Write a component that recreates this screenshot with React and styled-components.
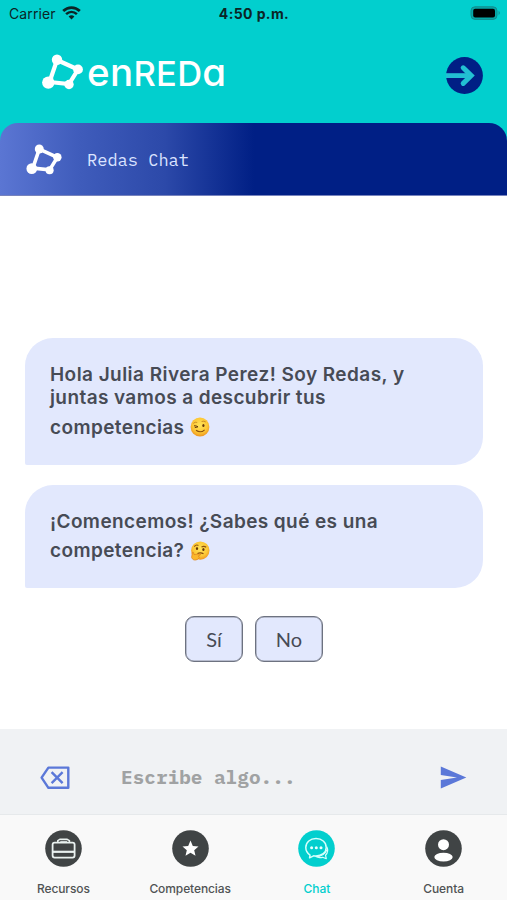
import React from "react";
import styled, { createGlobalStyle } from "styled-components";

const Colors = {
  teal: "#02cfce",
  navy: "#001f85",
  periwinkle: "#5b78d8",
  bubble: "#e2e8fd",
  text: "#474b55",
  dark: "#404445",
};

const Fonts = {
  ui: `"Inter", "Liberation Sans", sans-serif`,
  mono: `"IBM Plex Mono", "DejaVu Sans Mono", "Liberation Mono", monospace`,
  lato: `"Lato", "Liberation Sans", sans-serif`,
};

const App = () => {
  return (
    <>
      <GlobalStyle />
      <Screen>
        <StatusBar>
          <Carrier>
            <CarrierName>Carrier</CarrierName>
            <WifiIcon />
          </Carrier>
          <Time>4:50 p.m.</Time>
          <BatteryIcon />
        </StatusBar>
        <Header>
          <Brand>
            <NetworkIcon width={41} height={36} />
            <Wordmark>
              <Lower>en</Lower>RED<Lower>a</Lower>
            </Wordmark>
          </Brand>
          <ExitIcon />
        </Header>
        <TitleWrapper>
          <TitleBar>
            <NetworkIcon width={36} height={31} />
            <Title>Redas Chat</Title>
          </TitleBar>
        </TitleWrapper>
        <Messages>
          <Bubble>
            <Line $spacing="0.45px">Hola Julia Rivera Perez! Soy Redas, y</Line>
            <Line>juntas vamos a descubrir tus</Line>
            <EmojiLine $height="34px">
              competencias
              <WinkEmoji />
            </EmojiLine>
          </Bubble>
          <Bubble>
            <Line>¡Comencemos! ¿Sabes qué es una</Line>
            <EmojiLine>
              competencia?
              <ThinkingEmoji />
            </EmojiLine>
          </Bubble>
          <Answers>
            <Answer $width="58px">Sí</Answer>
            <Answer $width="68px">No</Answer>
          </Answers>
        </Messages>
        <Composer>
          <EraseIcon />
          <Input placeholder="Escribe algo..." />
          <SendIcon />
        </Composer>
        <TabBar>
          <Tab>
            <CaseIcon />
            Recursos
          </Tab>
          <Tab>
            <StarIcon />
            Competencias
          </Tab>
          <Tab $active>
            <ChatIcon />
            Chat
          </Tab>
          <Tab>
            <PersonIcon />
            Cuenta
          </Tab>
        </TabBar>
      </Screen>
    </>
  );
};

const NetworkIcon = ({ width, height }) => (
  <svg width={width} height={height} viewBox="0 0 41 36" fill="#fff">
    <path
      d="M15 6 L36 15.5 L27 30 L7.5 28 Z"
      fill="none"
      stroke="#fff"
      strokeWidth="4.2"
    />
    <circle cx="15" cy="5.8" r="5.2" />
    <circle cx="36" cy="15.4" r="4.9" />
    <circle cx="27" cy="30.5" r="4.7" />
    <circle cx="6.3" cy="28.6" r="6.2" />
  </svg>
);

const WifiIcon = () => (
  <svg width="19" height="14" viewBox="0 0 19 14" fill="none" stroke="#0b2526">
    <path d="M1.2 5 C6 0.4 13 0.4 17.8 5" strokeWidth="2.8" />
    <path d="M4.1 8.1 C7.3 5.2 11.7 5.2 14.9 8.1" strokeWidth="2.6" />
    <path d="M6.6 10.4 C8.4 8.9 10.6 8.9 12.4 10.4 L9.5 13.6 Z" fill="#0b2526" stroke="none" />
  </svg>
);

const BatteryIcon = () => (
  <svg width="31" height="14" viewBox="0 0 31 14">
    <rect x="1" y="0.8" width="26" height="12.6" rx="4" fill="#04a9a9" stroke="#158b8d" />
    <rect x="3.2" y="2.8" width="21.8" height="8.8" rx="2" fill="#000" />
    <path d="M28.6 4.8 Q31 7 28.6 9.3 Z" fill="#158b8d" />
  </svg>
);

const ExitIcon = () => (
  <svg width="37" height="37" viewBox="0 0 37 37">
    <circle cx="18.5" cy="18.5" r="18.4" fill={Colors.navy} />
    <path d="M0 18.6 H24" stroke="#22c0d3" strokeWidth="4.8" />
    <path
      d="M17.2 10.8 L25.2 18.6 L17.2 26.4"
      fill="none"
      stroke="#22c0d3"
      strokeWidth="5"
      strokeLinecap="round"
    />
  </svg>
);

const WinkEmoji = () => (
  <svg width="20" height="20" viewBox="0 0 20 20" fill="none">
    <defs>
      <radialGradient id="wink" cx="0.5" cy="0.4" r="0.6">
        <stop offset="0" stopColor="#ffe45a" />
        <stop offset="0.65" stopColor="#fdc835" />
        <stop offset="1" stopColor="#ee9520" />
      </radialGradient>
    </defs>
    <circle cx="10" cy="10" r="9.4" fill="url(#wink)" />
    <path d="M3.3 6.4 Q5 4.6 7.2 5.4" stroke="#b8741a" strokeWidth="0.7" />
    <path d="M11.6 4.5 Q14 3.6 15.8 5" stroke="#b8741a" strokeWidth="0.7" />
    <path d="M4 8.8 Q6.4 8.6 8 9.8 L4.8 10.6" stroke="#65380b" strokeWidth="1" />
    <ellipse cx="13.4" cy="8.6" rx="1.1" ry="1.5" fill="#65380b" />
    <path d="M6 13.2 Q10.5 16.6 14.6 12.8" stroke="#884b0c" strokeWidth="1.1" />
  </svg>
);

const ThinkingEmoji = () => (
  <svg width="20" height="20" viewBox="0 0 20 20" fill="none">
    <defs>
      <radialGradient id="thinking" cx="0.5" cy="0.4" r="0.6">
        <stop offset="0" stopColor="#ffe45a" />
        <stop offset="0.65" stopColor="#fdc835" />
        <stop offset="1" stopColor="#ee9520" />
      </radialGradient>
    </defs>
    <circle cx="10.3" cy="9.6" r="9.2" fill="url(#thinking)" />
    <path d="M4.3 5.6 Q6 3.2 8.4 4.4" stroke="#8e520f" strokeWidth="1.1" />
    <path d="M11.5 6 Q14 4.6 16.2 6.3" stroke="#8e520f" strokeWidth="1.1" />
    <ellipse cx="7" cy="7.6" rx="1.1" ry="1.5" fill="#65380b" />
    <ellipse cx="13.4" cy="8.5" rx="1.1" ry="1.5" fill="#65380b" />
    <path d="M7.5 12.6 Q10.5 11 13.5 12.8" stroke="#884b0c" strokeWidth="1.2" />
    <path
      d="M2.4 11.2 Q3.8 10.6 4 13.6 L10.4 12.8 Q11.4 14 8.4 14.8 Q10.5 16.5 7.6 18.4 Q3.2 20.4 1.6 16.5 Z"
      fill="#fbb72b"
      stroke="#dc821b"
      strokeWidth="0.7"
    />
  </svg>
);

const EraseIcon = () => (
  <svg width="30" height="24" viewBox="0 0 30 24" fill="none" stroke={Colors.periwinkle}>
    <path d="M8.4 1.6 H28.3 V21.8 H8.4 L1.6 11.7 Z" strokeWidth="2.4" strokeLinejoin="round" />
    <path d="M11.6 6.2 L22.6 17.2 M22.6 6.2 L11.6 17.2" strokeWidth="2.4" />
  </svg>
);

const SendIcon = () => (
  <svg width="27" height="23" viewBox="0 0 27 23" fill={Colors.periwinkle}>
    <path d="M0.8 0.5 L26.3 11.5 L0.8 22.5 V14 L17 11.5 L0.8 9 Z" />
  </svg>
);

const CaseIcon = () => (
  <svg width="37" height="37" viewBox="0 0 37 37" fill="none" stroke="#e9f1f0">
    <circle cx="18.5" cy="18.5" r="18.3" fill={Colors.dark} stroke="none" />
    <rect x="7.6" y="12.6" width="22" height="15" rx="2" strokeWidth="1.8" />
    <path d="M8 21.8 H29.2" strokeWidth="2.2" />
    <path d="M12.8 12 V10.6 L15 9.2 H22 L24.4 10.6 V12" strokeWidth="1.6" />
    <path d="M15.3 11.3 H22" strokeWidth="1" />
  </svg>
);

const StarIcon = () => (
  <svg width="37" height="37" viewBox="0 0 37 37">
    <circle cx="18.5" cy="18.5" r="18.3" fill={Colors.dark} />
    <path
      d="M18.5 10.6 L20.8 15.9 L26.5 16.4 L22.2 20.2 L23.5 25.8 L18.5 22.8 L13.5 25.8 L14.8 20.2 L10.5 16.4 L16.2 15.9 Z"
      fill="#fff"
    />
  </svg>
);

const ChatIcon = () => (
  <svg width="37" height="37" viewBox="0 0 37 37" fill="none" stroke="#d5fffc">
    <circle cx="18.5" cy="18.5" r="18.3" fill={Colors.teal} stroke="none" />
    <path
      d="M12 25.2 Q7.8 22.2 7.8 17.6 C7.8 12 12.3 8.5 18 8.5 C23.8 8.5 28.2 12.2 28.2 17.4 C28.2 22.7 23.8 26 18 26 Q16.8 26 15.6 25.8 L11.6 27.8 Z"
      strokeWidth="1.5"
      strokeLinejoin="round"
    />
    <path
      d="M28.8 16.8 Q31.2 21.6 27.5 25.2 L28.3 28.7 L24.6 27.3 Q20.5 28.3 17.8 26.6 Q26 26.5 28.8 20"
      strokeWidth="1.2"
      strokeLinejoin="round"
    />
    <g fill="#e9fffd" stroke="none">
      <circle cx="13.6" cy="17.7" r="1.5" />
      <circle cx="18.3" cy="17.7" r="1.5" />
      <circle cx="23" cy="17.7" r="1.5" />
    </g>
  </svg>
);

const PersonIcon = () => (
  <svg width="37" height="37" viewBox="0 0 37 37" fill="#fff">
    <circle cx="18.5" cy="18.5" r="18.3" fill={Colors.dark} />
    <circle cx="18.5" cy="14.7" r="5.5" />
    <ellipse cx="18.5" cy="27.1" rx="9.2" ry="4.4" />
  </svg>
);

const GlobalStyle = createGlobalStyle`
  * {
    box-sizing: border-box;
  }
  body {
    margin: 0;
  }
  svg {
    display: block;
    flex-shrink: 0;
  }
`;

const Screen = styled.div`
  width: 507px;
  height: 900px;
  display: flex;
  flex-direction: column;
  overflow: hidden;
  background: #fff;
  font-family: ${Fonts.ui};
`;

const StatusBar = styled.div`
  height: 28px;
  display: grid;
  grid-template-columns: 1fr auto 1fr;
  align-items: center;
  padding: 0 6px 2px 9px;
  background: ${Colors.teal};
  color: #0b2526;

  > svg {
    justify-self: end;
  }
`;

const Carrier = styled.div`
  display: flex;
  align-items: center;
  gap: 6px;

  svg {
    margin-bottom: 1px;
  }
`;

const CarrierName = styled.span`
  font-size: 14px;
  letter-spacing: 0.1px;
`;

const Time = styled.div`
  margin-right: 2px;
  font-size: 14px;
  font-weight: 700;
  letter-spacing: 0.4px;
`;

const Header = styled.div`
  height: 95px;
  display: flex;
  align-items: center;
  justify-content: space-between;
  padding: 0 24px 0 42px;
  background: ${Colors.teal};
`;

const Brand = styled.div`
  display: flex;
  align-items: center;
  gap: 4px;
  margin-bottom: 7px;
`;

const Wordmark = styled.div`
  padding-top: 2px;
  color: #fff;
  font-size: 34.5px;
  font-weight: 550;
  line-height: 36px;
  letter-spacing: 0.3px;
  font-feature-settings: "cv11";
  white-space: nowrap;
`;

const Lower = styled.span`
  font-size: 38.5px;
`;

const TitleWrapper = styled.div`
  height: 73px;
  background: ${Colors.teal};
`;

const TitleBar = styled.div`
  height: 100%;
  display: flex;
  align-items: center;
  gap: 25px;
  padding: 1px 26px 0;
  border-radius: 18px 18px 0 0;
  border-bottom: 1px solid #7783bd;
  background: linear-gradient(90deg, #5b76d3 0, #3f5cbb 80px, #2c49a9 165px, ${Colors.navy} 254px);
`;

const Title = styled.div`
  padding-top: 1px;
  color: #dce4ff;
  font-family: ${Fonts.mono};
  font-size: 17px;
`;

const Messages = styled.div`
  height: 533px;
  display: flex;
  flex-direction: column;
  gap: 20px;
  padding: 142px 24px 0 25px;
`;

const Bubble = styled.div`
  padding: 25px 25px 22px;
  border-radius: 28px 28px 28px 2px;
  background: ${Colors.bubble};
  color: ${Colors.text};
  font-size: 19px;
  font-weight: 600;
`;

const Line = styled.div`
  line-height: 23px;
  letter-spacing: ${(props) => props.$spacing || "0.4px"};
  white-space: nowrap;
`;

const EmojiLine = styled(Line)`
  display: flex;
  align-items: center;
  gap: 6px;
  height: ${(props) => props.$height || "33px"};
  padding-top: 2px;
`;

const Answers = styled.div`
  display: flex;
  justify-content: center;
  gap: 12px;
  margin-top: 8px;
`;

const Answer = styled.button`
  width: ${(props) => props.$width};
  height: 46px;
  padding: 0;
  border: 1px solid #6d7280;
  border-radius: 9px;
  box-shadow: inset 0 0 0 0.5px #8b90a0;
  background: ${Colors.bubble};
  color: ${Colors.text};
  font-family: ${Fonts.lato};
  font-size: 20px;
`;

const Composer = styled.div`
  height: 86px;
  display: flex;
  align-items: center;
  padding: 12px 40px 0;
  border-bottom: 1px solid #e6e9eb;
  background: #f0f2f4;
`;

const Input = styled.input`
  flex: 1;
  min-width: 0;
  margin-left: 51px;
  padding: 0 0 2px;
  border: none;
  outline: none;
  background: transparent;
  font-family: ${Fonts.mono};
  font-size: 19.4px;
  font-weight: 700;

  &::placeholder {
    color: #a0a2a3;
    opacity: 1;
  }
`;

const TabBar = styled.div`
  height: 85px;
  display: grid;
  grid-template-columns: repeat(4, 1fr);
  padding-top: 15px;
  background: #f9f9f9;
`;

const Tab = styled.div`
  display: flex;
  flex-direction: column;
  align-items: center;
  gap: 14px;
  color: ${(props) => (props.$active ? Colors.teal : "#505354")};
  font-size: 12px;
  font-weight: 500;
  line-height: 15px;
  letter-spacing: -0.1px;
`;

export default App;
